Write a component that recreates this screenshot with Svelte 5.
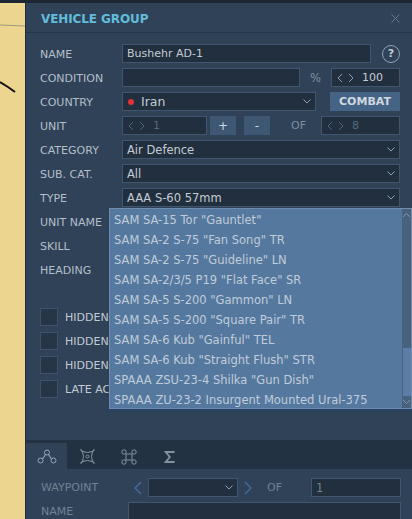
<script lang="ts">
	const options = [
		'SAM SA-15 Tor "Gauntlet"',
		'SAM SA-2 S-75 "Fan Song" TR',
		'SAM SA-2 S-75 "Guideline" LN',
		'SAM SA-2/3/5 P19 "Flat Face" SR',
		'SAM SA-5 S-200 "Gammon" LN',
		'SAM SA-5 S-200 "Square Pair" TR',
		'SAM SA-6 Kub "Gainful" TEL',
		'SAM SA-6 Kub "Straight Flush" STR',
		'SPAAA ZSU-23-4 Shilka "Gun Dish"',
		'SPAAA ZU-23-2 Insurgent Mounted Ural-375'
	];
	const checks = ['HIDDEN ON MAP', 'HIDDEN ON PLANNER', 'HIDDEN ON MFD', 'LATE ACTIVATION'];
	const selects = [
		['CATEGORY', 'Air Defence'],
		['SUB. CAT.', 'All'],
		['TYPE', 'AAA S-60 57mm']
	];
</script>

{#snippet chevron()}
	<svg class="chev" width="8" height="5" viewBox="0 0 8 5"><path d="M.5.5L4 4 7.5.5" fill="none" stroke="#8fa0b2" stroke-width="1" /></svg>
{/snippet}

{#snippet stepper(value: string, dim: boolean)}
	<svg class="arrows" class:dim width="17" height="10" viewBox="0 0 17 10"><path d="M5 1L1 5l4 4M12 1l4 4-4 4" fill="none" stroke="currentColor" stroke-width="1" /></svg>
	<span class="stepval" class:dim>{value}</span>
{/snippet}

<div class="screen">
	<div class="map">
		<svg width="26" height="519" viewBox="0 0 26 519">
			<path d="M0 25l26 1" stroke="#9c9a80" stroke-width="1" fill="none" />
			<path d="M0 82l8 5 7 5" stroke="#111" stroke-width="2" fill="none" />
		</svg>
	</div>
	<div class="panel">
		<header class="title">
			<h1>VEHICLE GROUP</h1>
			<svg class="close" width="9" height="9" viewBox="0 0 9 9"><path d="M.5.5l8 8M8.5.5l-8 8" stroke="#64798e" stroke-width="1" /></svg>
		</header>

		<div class="form">
			<div class="row">
				<span class="label">NAME</span>
				<div class="field name">Bushehr AD-1</div>
				<span class="help">?</span>
			</div>
			<div class="row">
				<span class="label">CONDITION</span>
				<div class="field cond"></div>
				<span class="pct">%</span>
				<div class="field step100">{@render stepper('100', false)}</div>
			</div>
			<div class="row">
				<span class="label">COUNTRY</span>
				<div class="field country"><i class="dot"></i>Iran{@render chevron()}</div>
				<button class="combat">COMBAT</button>
			</div>
			<div class="row">
				<span class="label">UNIT</span>
				<div class="field unit">{@render stepper('1', true)}</div>
				<button class="pm">+</button>
				<button class="pm minus">-</button>
				<span class="of">OF</span>
				<div class="field total">{@render stepper('8', true)}</div>
			</div>
			{#each selects as [label, value]}
				<div class="row">
					<span class="label">{label}</span>
					<div class="field grow">{value}{@render chevron()}</div>
				</div>
			{/each}
			<div class="row"><span class="label">UNIT NAME</span></div>
			<div class="row"><span class="label">SKILL</span></div>
			<div class="row"><span class="label">HEADING</span></div>
		</div>

		<div class="checks">
			{#each checks as c}
				<div class="check"><i class="box"></i><span>{c}</span></div>
			{/each}
		</div>

		<nav class="tabs">
			<div class="tab active">
				<svg width="20" height="16" viewBox="0 0 20 16" fill="none" stroke="#96a5b4" stroke-width="1"><circle cx="3.5" cy="11.500" r="2.500" /><circle cx="10" cy="3.500" r="2.500" /><circle cx="16.500" cy="11.500" r="2.500" /><path d="M5.500 10l3-4.500M11.500 5.500l3 4.500" stroke-width="1.200" /></svg>
			</div>
			<div class="tab">
				<svg width="15" height="15" viewBox="0 0 15 15" fill="none" stroke="#84939f" stroke-width="1"><path d="M2.500 2.500q5 2 10 0q-2 5 0 10q-5-2-10 0q2-5 0-10z" /><circle cx="7.500" cy="7.500" r="1.500" /><path d="M.5.5l2.500 2.500M14.500.5l-2.500 2.500M.5 14.500l2.500-2.500M14.500 14.500l-2.500-2.500" stroke-width="1.300" /></svg>
			</div>
			<div class="tab">
				<svg width="16" height="16" viewBox="0 0 16 16" fill="none" stroke="#84939f" stroke-width="1"><circle cx="3" cy="3" r="2.200" /><circle cx="13" cy="3" r="2.200" /><circle cx="3" cy="13" r="2.200" /><circle cx="13" cy="13" r="2.200" /><path d="M5 5v6M11 5v6M5 5h6M5 11h6" /></svg>
			</div>
			<div class="tab">
				<svg width="11" height="12" viewBox="0 0 11 12" fill="none" stroke="#84939f" stroke-width="1.800"><path d="M10.500 1H1.800l4 5-4 5h8.700" /></svg>
			</div>
		</nav>

		<div class="waypoint">
			<div class="row">
				<span class="wlabel">WAYPOINT</span>
				<svg class="wnav" width="10" height="14" viewBox="0 0 10 14"><path d="M8 1L2 7l6 6" fill="none" stroke="#44678f" stroke-width="1.600" /></svg>
				<div class="field wsel">{@render chevron()}</div>
				<svg class="wnav" width="10" height="14" viewBox="0 0 10 14"><path d="M2 1l6 6-6 6" fill="none" stroke="#44678f" stroke-width="1.600" /></svg>
				<span class="wof">OF</span>
				<div class="field wtotal">1</div>
			</div>
			<div class="row">
				<span class="wlabel wname-label">NAME</span>
				<div class="field wname"></div>
			</div>
		</div>

		<div class="dropdown">
			<ul>
				{#each options as o}
					<li>{o}</li>
				{/each}
			</ul>
			<div class="scroll">
				<svg width="9" height="6" viewBox="0 0 9 6"><path d="M1 5l3.500-3.500L8 5" fill="none" stroke="#8197ae" /></svg>
				<div class="thumb"></div>
				<svg width="9" height="6" viewBox="0 0 9 6"><path d="M1 1l3.500 3.500L8 1" fill="none" stroke="#8197ae" /></svg>
			</div>
		</div>
	</div>
</div>

<style>
	:global(body) {
		margin: 0;
		background: #2f4257;
	}
	.screen {
		display: flex;
		width: 412px;
		height: 519px;
		overflow: hidden;
		font-family: 'DejaVu Sans', sans-serif;
		font-size: 11.5px;
		color: #c3ccd5;
		border-top: 3px solid #1c2733;
		box-sizing: border-box;
	}
	.map {
		flex: 0 0 26px;
		background: #ecd58f;
		height: 516px;
	}
	.map svg {
		display: block;
		margin-top: -3px;
	}
	.panel {
		position: relative;
		flex: 1;
		background: #2f4257;
		min-width: 0;
		box-shadow: -1px 0 0 #1f2c3a;
	}
	.title {
		height: 30px;
		display: flex;
		align-items: center;
		justify-content: space-between;
		padding: 2px 12px 0 15px;
		border-bottom: 1px solid #263646;
		box-sizing: border-box;
	}
	h1 {
		margin: 0;
		font-size: 12px;
		font-weight: 700;
		color: #63bcdc;
		letter-spacing: -0.1px;
	}
	.form {
		display: flex;
		flex-direction: column;
		gap: 5px;
		padding: 11px 0 0 14px;
	}
	.row {
		display: flex;
		align-items: center;
		height: 19px;
	}
	.label {
		flex: 0 0 82px;
		padding-top: 1px;
		font-size: 11px;
		color: #b4bfca;
	}
	.field {
		position: relative;
		display: flex;
		align-items: center;
		box-sizing: border-box;
		height: 19px;
		padding-left: 4px;
		background: #222f3e;
		border: 1px solid #3f566e;
		white-space: nowrap;
	}
	.chev {
		position: absolute;
		right: 4px;
		top: 6px;
	}
	.name {
		width: 249px;
		font-size: 11px;
	}
	.help {
		width: 16px;
		height: 16px;
		margin-left: 11px;
		border: 1px solid #8fa3b7;
		border-radius: 50%;
		display: flex;
		align-items: center;
		justify-content: center;
		font-weight: 700;
		font-size: 11px;
	}
	.cond {
		width: 178px;
	}
	.pct {
		width: 31px;
		text-align: center;
		color: #7f8f9f;
	}
	.step100 {
		width: 69px;
	}
	.arrows {
		color: #8b99a8;
		flex: none;
		margin-left: 1px;
	}
	.stepval {
		margin-left: 8px;
		font-size: 11px;
	}
	.arrows.dim {
		color: #4f6478;
	}
	.stepval.dim {
		color: #55697d;
	}
	.country {
		width: 194px;
		font-size: 12.5px;
	}
	.dot {
		width: 6px;
		height: 6px;
		border-radius: 50%;
		background: #e5313a;
		margin: 0 7px 0 1px;
	}
	.combat {
		width: 70px;
		height: 19px;
		margin-left: 14px;
		padding: 0;
		border: 0;
		background: #456384;
		color: #d0d8e0;
		font: 700 11px 'DejaVu Sans', sans-serif;
	}
	.unit {
		width: 85px;
	}
	.pm {
		width: 26px;
		height: 19px;
		margin-left: 3px;
		padding: 0;
		border: 0;
		background: #3e5772;
		color: #d0d8e0;
		font: 400 12px 'DejaVu Sans', sans-serif;
	}
	.minus {
		margin-left: 8px;
	}
	.of {
		width: 51px;
		padding-left: 6px;
		box-sizing: border-box;
		text-align: center;
		color: #7f8f9f;
		font-size: 11px;
	}
	.total {
		width: 79px;
	}
	.grow {
		width: 278px;
	}
	.checks {
		display: flex;
		flex-direction: column;
		gap: 6px;
		margin: 29px 0 0 14px;
	}
	.check {
		display: flex;
		align-items: center;
		gap: 7px;
		height: 18px;
		font-size: 11px;
		white-space: nowrap;
	}
	.check span {
		padding-top: 1px;
	}
	.box {
		width: 18px;
		height: 18px;
		box-sizing: border-box;
		background: #273646;
		border: 1px solid #3d5268;
	}
	.tabs {
		display: flex;
		height: 29px;
		margin-top: 42px;
		padding-top: 3px;
		box-sizing: border-box;
		background: #233243;
	}
	.tab {
		width: 41px;
		padding-top: 1px;
		display: flex;
		align-items: center;
		justify-content: center;
	}
	.tab.active {
		background: #2f4257;
	}
	.waypoint {
		display: flex;
		flex-direction: column;
		gap: 5px;
		padding: 9px 0 0 15px;
	}
	.wlabel {
		flex: 0 0 92px;
		font-size: 11px;
		color: #6f8294;
	}
	.wname-label {
		flex-basis: 87px;
	}
	.wnav {
		flex: none;
	}
	.wsel {
		width: 90px;
		margin: 0 5px;
	}
	.wof {
		flex: 0 0 58px;
		padding-left: 14px;
		box-sizing: border-box;
		color: #6f8294;
		font-size: 11px;
	}
	.wtotal {
		width: 90px;
		color: #6f8294;
	}
	.wname {
		width: 273px;
	}
	.dropdown {
		position: absolute;
		left: 83px;
		top: 205px;
		width: 303px;
		height: 201px;
		display: flex;
		box-sizing: border-box;
		background: #55789f;
		border: 1px solid #6d8cae;
		box-shadow: 0 2px 2px rgba(35, 65, 105, 0.7);
	}
	ul {
		flex: 1;
		margin: 0;
		padding: 0;
		list-style: none;
		color: #c0ccd8;
	}
	li {
		height: 20px;
		line-height: 22px;
		padding-left: 4px;
		white-space: nowrap;
	}
	.scroll {
		width: 9px;
		background: #47617e;
		display: flex;
		flex-direction: column;
		justify-content: space-between;
		align-items: center;
		padding: 3px 0;
		box-sizing: border-box;
		position: relative;
	}
	.thumb {
		position: absolute;
		left: 1px;
		right: 0;
		top: 139px;
		height: 48px;
		background: #5b7da6;
	}
</style>
